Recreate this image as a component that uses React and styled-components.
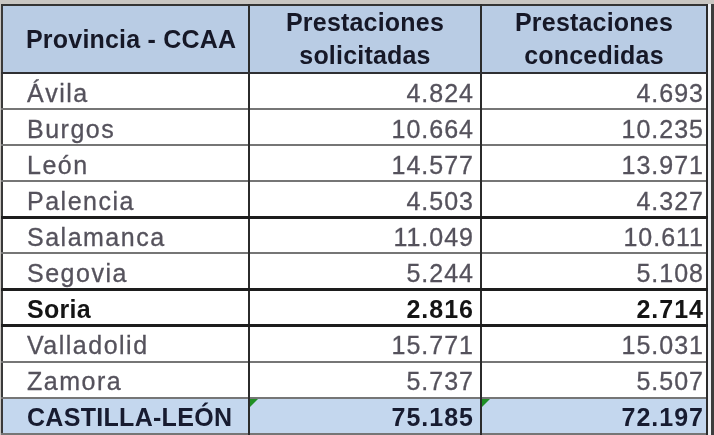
import React from "react";
import styled, { createGlobalStyle } from "styled-components";

const GlobalStyle = createGlobalStyle`
	html, body {
		margin: 0;
		padding: 0;
		background: #c9c6c2;
	}
	body {
		font-family: "Liberation Sans", Arial, sans-serif;
	}
`;

const Frame = styled.div`
	width: 714px;
	height: 435px;
	display: flex;
	padding: 4px 0 0 1px;
	box-sizing: border-box;
	overflow: hidden;
`;

const RightEdge = styled.div`
	width: 8px;
	flex: none;
	background: linear-gradient(to right, #eef0f4 0 3px, #3d3d3d 3px);
`;

const Table = styled.table`
	border-collapse: collapse;
	table-layout: fixed;
	width: 705px;
	flex: none;
	background: #ffffff;
	border-left: 2px solid #3a3a3a;
	border-top: 2px solid #343434;
	filter: blur(0.4px);
`;

const HeadCell = styled.th`
	height: 64px;
	padding: 0;
	padding-left: ${(props) => (props.$left ? "23px" : "0")};
	background: #b9cce4;
	color: #161827;
	font-size: 25px;
	font-weight: bold;
	line-height: 33px;
	letter-spacing: 0.2px;
	text-align: ${(props) => (props.$left ? "left" : "center")};
	border-right: 2px solid #2b2b2b;
	border-bottom: 2px solid #2f2f33;
`;

const Row = styled.tr`
	height: 36px;
	background: ${(props) => (props.$total ? "#c4d7ee" : "#ffffff")};
	border-bottom: ${(props) =>
		props.$thick ? "3px solid #1d1d1d" : "2px solid #767676"};
`;

const NameCell = styled.td`
	padding: 3px 0 0 24px;
	font-size: 25px;
	line-height: 30px;
	font-weight: ${(props) => (props.$bold ? "bold" : "normal")};
	color: ${(props) => props.$color};
	letter-spacing: ${(props) => (props.$bold ? "0.3px" : "1.5px")};
	-webkit-text-stroke: ${(props) => (props.$bold ? "0" : "0.3px")};
	border-right: 2px solid #2b2b2b;
	white-space: nowrap;
`;

const NumCell = styled.td`
	position: relative;
	padding: 3px ${(props) => props.$pad}px 0 0;
	font-size: 25px;
	line-height: 30px;
	text-align: right;
	font-weight: ${(props) => (props.$bold ? "bold" : "normal")};
	color: ${(props) => props.$color};
	letter-spacing: 1px;
	-webkit-text-stroke: ${(props) => (props.$bold ? "0" : "0.3px")};
	border-right: 2px solid #2b2b2b;
	white-space: nowrap;
`;

const Flag = styled.span`
	position: absolute;
	top: 0;
	left: 0;
	width: 0;
	height: 0;
	border-top: 8px solid #1f8f24;
	border-right: 8px solid transparent;
`;

const rows = [
	{ name: "Ávila", a: "4.824", b: "4.693" },
	{ name: "Burgos", a: "10.664", b: "10.235" },
	{ name: "León", a: "14.577", b: "13.971" },
	{ name: "Palencia", a: "4.503", b: "4.327", thick: true },
	{ name: "Salamanca", a: "11.049", b: "10.611" },
	{ name: "Segovia", a: "5.244", b: "5.108", thick: true },
	{ name: "Soria", a: "2.816", b: "2.714", bold: true, thick: true },
	{ name: "Valladolid", a: "15.771", b: "15.031" },
	{ name: "Zamora", a: "5.737", b: "5.507" },
	{ name: "CASTILLA-LEÓN", a: "75.185", b: "72.197", total: true },
];

const colorFor = (r) => (r.total ? "#171b30" : r.bold ? "#141414" : "#55525c");

export default function App() {
	return (
		<>
			<GlobalStyle />
			<Frame>
				<Table>
					<colgroup>
						<col style={{ width: 247 }} />
						<col style={{ width: 232 }} />
						<col style={{ width: 226 }} />
					</colgroup>
					<thead>
						<tr>
							<HeadCell $left>Provincia - CCAA</HeadCell>
							<HeadCell>
								Prestaciones
								<br />
								solicitadas
							</HeadCell>
							<HeadCell>
								Prestaciones
								<br />
								concedidas
							</HeadCell>
						</tr>
					</thead>
					<tbody>
						{rows.map((r) => (
							<Row key={r.name} $total={r.total} $thick={r.thick}>
								<NameCell $bold={r.bold || r.total} $color={colorFor(r)}>
									{r.name}
								</NameCell>
								<NumCell $pad={6} $bold={r.bold || r.total} $color={colorFor(r)}>
									{r.total && <Flag />}
									{r.a}
								</NumCell>
								<NumCell $pad={2} $bold={r.bold || r.total} $color={colorFor(r)}>
									{r.total && <Flag />}
									{r.b}
								</NumCell>
							</Row>
						))}
					</tbody>
				</Table>
				<RightEdge />
			</Frame>
		</>
	);
}
